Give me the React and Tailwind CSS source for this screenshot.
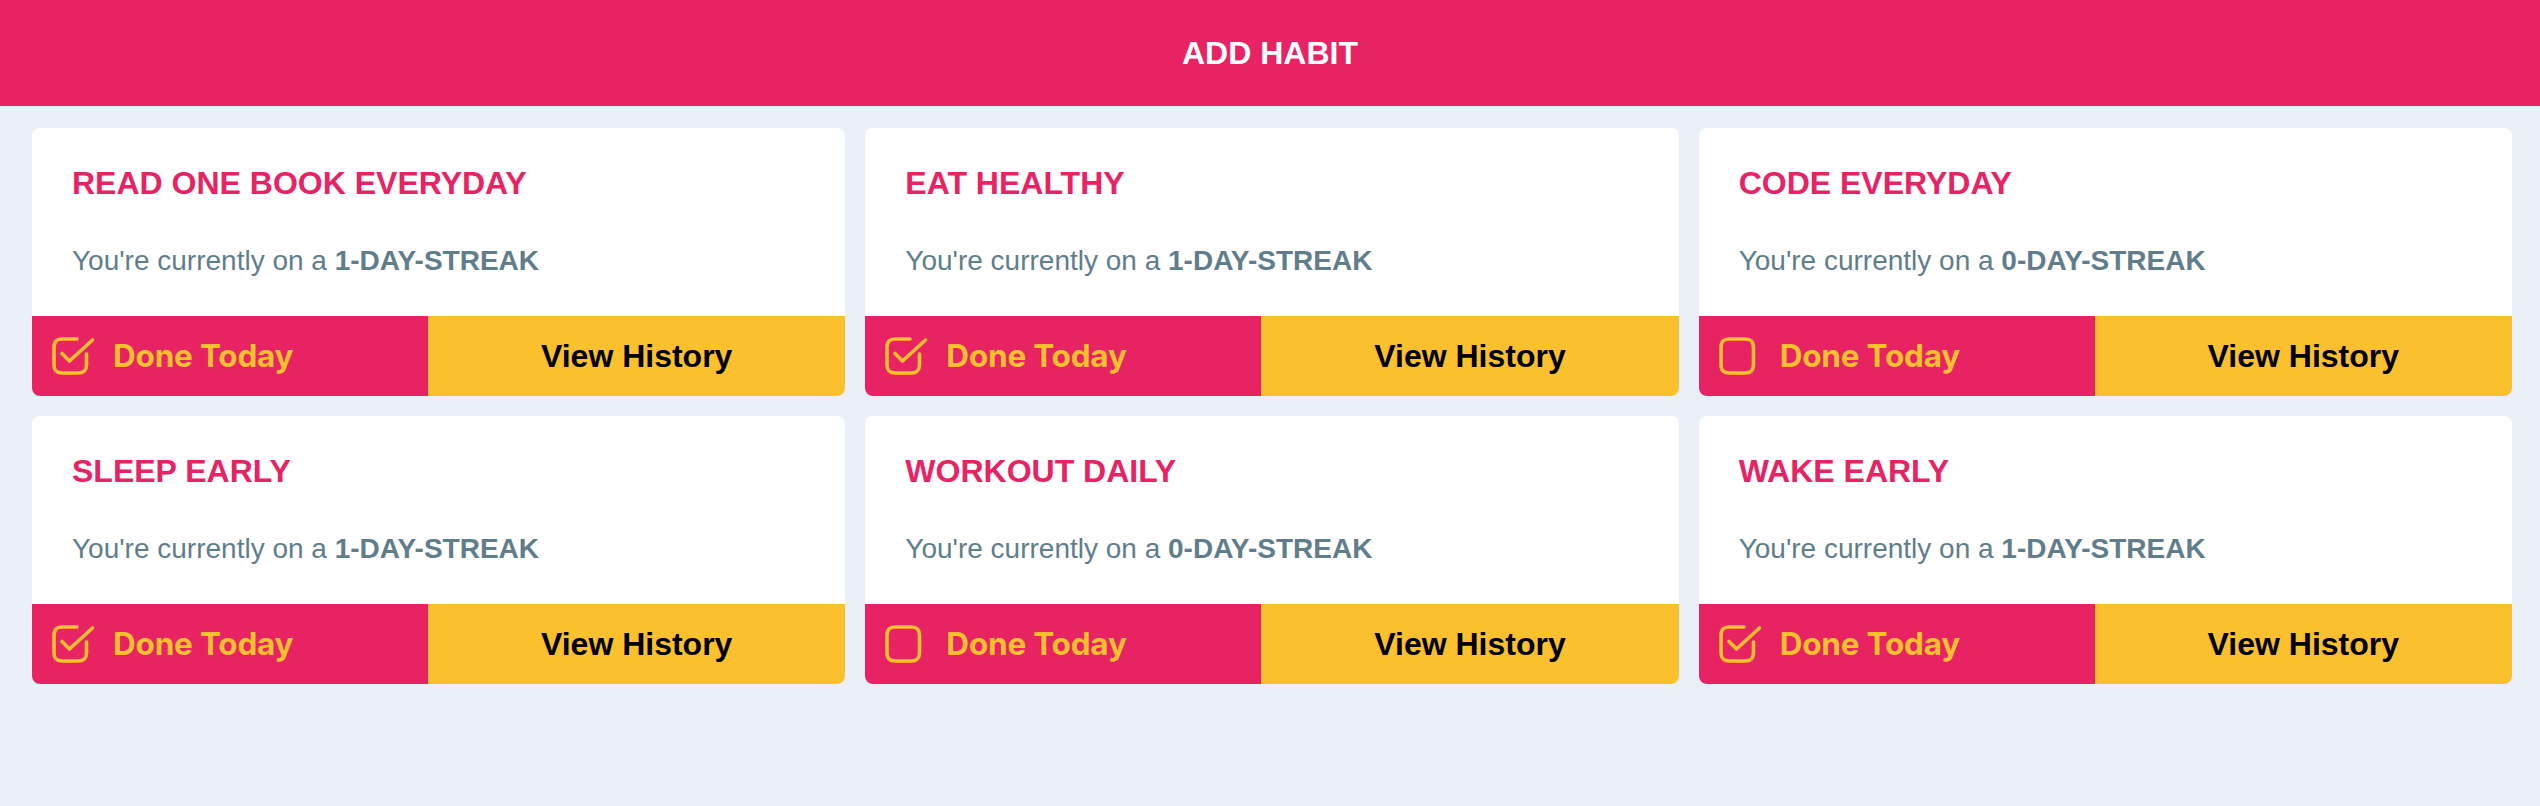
import React from "react";

const habits = [
  { name: "READ ONE BOOK EVERYDAY", streak: 1, done: true },
  { name: "EAT HEALTHY", streak: 1, done: true },
  { name: "CODE EVERYDAY", streak: 0, done: false },
  { name: "SLEEP EARLY", streak: 1, done: true },
  { name: "WORKOUT DAILY", streak: 0, done: false },
  { name: "WAKE EARLY", streak: 1, done: true },
];

function CheckIcon({ checked }) {
  return (
    <svg width="44" height="38" viewBox="0 0 44 38" fill="none" stroke="#fbc02d" strokeWidth="3.6" strokeLinecap="round" strokeLinejoin="round">
      {checked ? (
        <>
          <path d="M25 2 H10.5 C4.5 2 2 4.5 2 10.5 V27.5 C2 33.5 4.5 36 10.5 36 H26 C32 36 34.5 33.5 34.5 27.5 V17" />
          <path d="M10 16.5 L17.5 24 L40.5 3" />
        </>
      ) : (
        <path d="M10.5 2 H26 C32 2 34.5 4.5 34.5 10.5 V27.5 C34.5 33.5 32 36 26 36 H10.5 C4.5 36 2 33.5 2 27.5 V10.5 C2 4.5 4.5 2 10.5 2 Z" />
      )}
    </svg>
  );
}

function HabitCard({ habit }) {
  return (
    <div className="flex flex-col overflow-hidden rounded-lg bg-white">
      <div className="h-[188px] pl-10 pt-[37px]">
        <h2 className="m-0 text-[32px] font-bold leading-[37px] text-[#e72363]" style={{ fontFamily: '"Liberation Sans", Arial, sans-serif' }}>
          {habit.name}
        </h2>
        <p className="mt-[43px] text-[28px] leading-[32px] text-[#607d8b]" style={{ fontFamily: '"Liberation Sans", Arial, sans-serif' }}>
          You're currently on a <span className="font-bold">{habit.streak}-DAY-STREAK</span>
        </p>
      </div>
      <div className="flex h-20">
        <button className="flex w-[396px] shrink-0 items-center bg-[#e72363] pl-5 text-left">
          <CheckIcon checked={habit.done} />
          <span className="ml-[17px] text-[31.5px] font-bold text-[#fbc02d]" style={{ fontFamily: 'Inter, "Noto Sans", sans-serif', letterSpacing: "-0.2px" }}>
            Done Today
          </span>
        </button>
        <button className="flex flex-1 items-center justify-center bg-[#fbc02d] text-[32px] font-bold text-black" style={{ fontFamily: '"Liberation Sans", Arial, sans-serif' }}>
          View History
        </button>
      </div>
    </div>
  );
}

export default function App() {
  return (
    <div className="min-h-screen bg-[#eaeff8]">
      <button className="flex h-[106px] w-full items-center justify-center bg-[#e72363] text-[32px] font-bold text-white" style={{ fontFamily: '"Liberation Sans", Arial, sans-serif' }}>
        ADD HABIT
      </button>
      <div className="grid grid-cols-3 gap-5 pl-8 pr-[28px] pt-[22px]">
        {habits.map((h) => (
          <HabitCard key={h.name} habit={h} />
        ))}
      </div>
    </div>
  );
}
